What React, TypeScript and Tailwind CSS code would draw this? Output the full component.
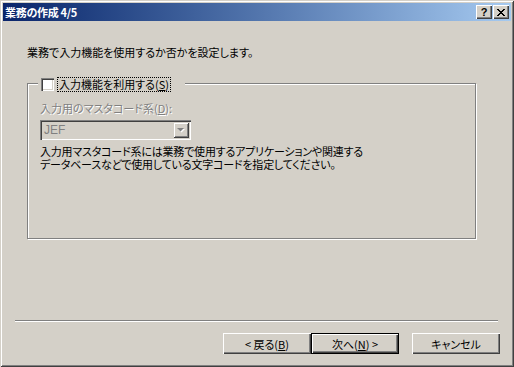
import React from "react";

const font = "font-['MS_UI_Gothic','Noto_Sans_CJK_JP',sans-serif] [font-feature-settings:'palt']";

function Btn({ children, def }: { children: React.ReactNode; def?: boolean }) {
  return (
    <div
      className={
        "w-[88px] h-[21px] flex items-center justify-center bg-[#d4d0c8] text-[11px] leading-[12px] text-black " +
        (def
          ? "border border-black shadow-[inset_1px_1px_0_#fff,inset_-1px_-1px_0_#404040,inset_-2px_-2px_0_#808080]"
          : "shadow-[inset_1px_1px_0_#fff,inset_-1px_-1px_0_#404040,inset_-2px_-2px_0_#808080]")
      }
    >
      {children}
    </div>
  );
}

export default function App() {
  return (
    <div
      className={
        "w-[514px] h-[367px] bg-[#d4d0c8] flex flex-col p-[3px] shadow-[inset_1px_1px_0_#d4d0c8,inset_-1px_-1px_0_#404040,inset_2px_2px_0_#fff,inset_-2px_-2px_0_#808080] " +
        font
      }
    >
      {/* Title bar */}
      <div className="h-[18px] flex items-center bg-gradient-to-r from-[#0a246a] to-[#a6caf0] pl-[2px] pr-[2px]">
        <span className="text-white font-bold text-[11px] leading-[12px] tracking-[-0.3px]">業務の作成 4/5</span>
        <div className="ml-auto flex gap-[1px]">
          <div className="w-[16px] h-[14px] bg-[#d4d0c8] flex items-center justify-center shadow-[inset_1px_1px_0_#fff,inset_-1px_-1px_0_#404040,inset_-2px_-2px_0_#808080]">
            <span className="text-black font-bold text-[11px] leading-[11px] font-['Liberation_Sans',sans-serif]">?</span>
          </div>
          <div className="w-[16px] h-[14px] bg-[#d4d0c8] flex items-center justify-center shadow-[inset_1px_1px_0_#fff,inset_-1px_-1px_0_#404040,inset_-2px_-2px_0_#808080]">
            <svg width="8" height="7" viewBox="0 0 8 7">
              <path d="M0 0h2v1H0zM6 0h2v1H6zM1 1h2v1H1zM5 1h2v1H5zM2 2h4v1H2zM3 3h2v1H3zM2 4h4v1H2zM1 5h2v1H1zM5 5h2v1H5zM0 6h2v1H0zM6 6h2v1H6z" fill="#000" />
            </svg>
          </div>
        </div>
      </div>

      {/* Body */}
      <div className="flex-1 flex flex-col">
        <div className="pl-[24px] pt-[25px] text-[11px] leading-[12px] text-black">
          業務で入力機能を使用するか否かを設定します。
        </div>

        {/* Group box */}
        <div className="relative ml-[24px] mt-[25px] w-[449px] h-[156px] border border-[#808080] shadow-[1px_1px_0_#fff,inset_1px_1px_0_#fff]">
          <div className="absolute left-[10px] top-[-7px] bg-[#d4d0c8] flex items-center pl-[3px] pr-[14px] h-[14px]">
            <div className="w-[13px] h-[13px] bg-white shadow-[inset_1px_1px_0_#808080,inset_2px_2px_0_#404040,inset_-1px_-1px_0_#fff,inset_-2px_-2px_0_#d4d0c8]" />
            <div className="ml-[3px] px-[1px] h-[15px] flex items-center border border-dotted border-black text-[11px] leading-[12px] text-black">
              入力機能を利用する(<span className="underline underline-offset-1">S</span>)
            </div>
          </div>

          <div className="pl-[12px] pt-[18px] text-[11px] leading-[12px] text-[#808080] [text-shadow:1px_1px_0_#fff]">
            入力用のマスタコード系(<span className="underline underline-offset-1">D</span>):
          </div>

          <div className="ml-[12px] mt-[6px] w-[151px] h-[20px] flex items-center bg-[#d4d0c8] shadow-[inset_1px_1px_0_#808080,inset_2px_2px_0_#404040,inset_-1px_-1px_0_#fff,inset_-2px_-2px_0_#d4d0c8]">
            <span className="pl-[4px] text-[12px] leading-[12px] text-[#808080] font-['Liberation_Sans',sans-serif]">JEF</span>
            <div className="ml-auto mr-[2px] w-[16px] h-[16px] flex items-center justify-center bg-[#d4d0c8] shadow-[inset_1px_1px_0_#d4d0c8,inset_-1px_-1px_0_#404040,inset_2px_2px_0_#fff,inset_-2px_-2px_0_#808080]">
              <svg width="8" height="5" viewBox="0 0 8 5">
                <path d="M1 1h7L4.5 4.5z" fill="#fff" />
                <path d="M0 0h7L3.5 3.5z" fill="#808080" />
              </svg>
            </div>
          </div>

          <p className="pl-[12px] pt-[5px] text-[11px] leading-[13px] tracking-[-0.2px] text-black">
            入力用マスタコード系には業務で使用するアプリケーションや関連する
            <br />
            データベースなどで使用している文字コードを指定してください。
          </p>
        </div>

        <div className="flex-1" />

        {/* Separator */}
        <div className="ml-[12px] w-[483px] h-[2px] border-t border-[#808080] border-b border-b-white" />

        {/* Buttons */}
        <div className="flex pl-[220px] pt-[11px] pb-[10px]">
          <Btn>
            &lt; 戻る(<span className="underline underline-offset-1">B</span>)
          </Btn>
          <Btn def>
            次へ(<span className="underline underline-offset-1">N</span>) &gt;
          </Btn>
          <div className="ml-[13px]">
            <Btn>キャンセル</Btn>
          </div>
        </div>
      </div>
    </div>
  );
}
